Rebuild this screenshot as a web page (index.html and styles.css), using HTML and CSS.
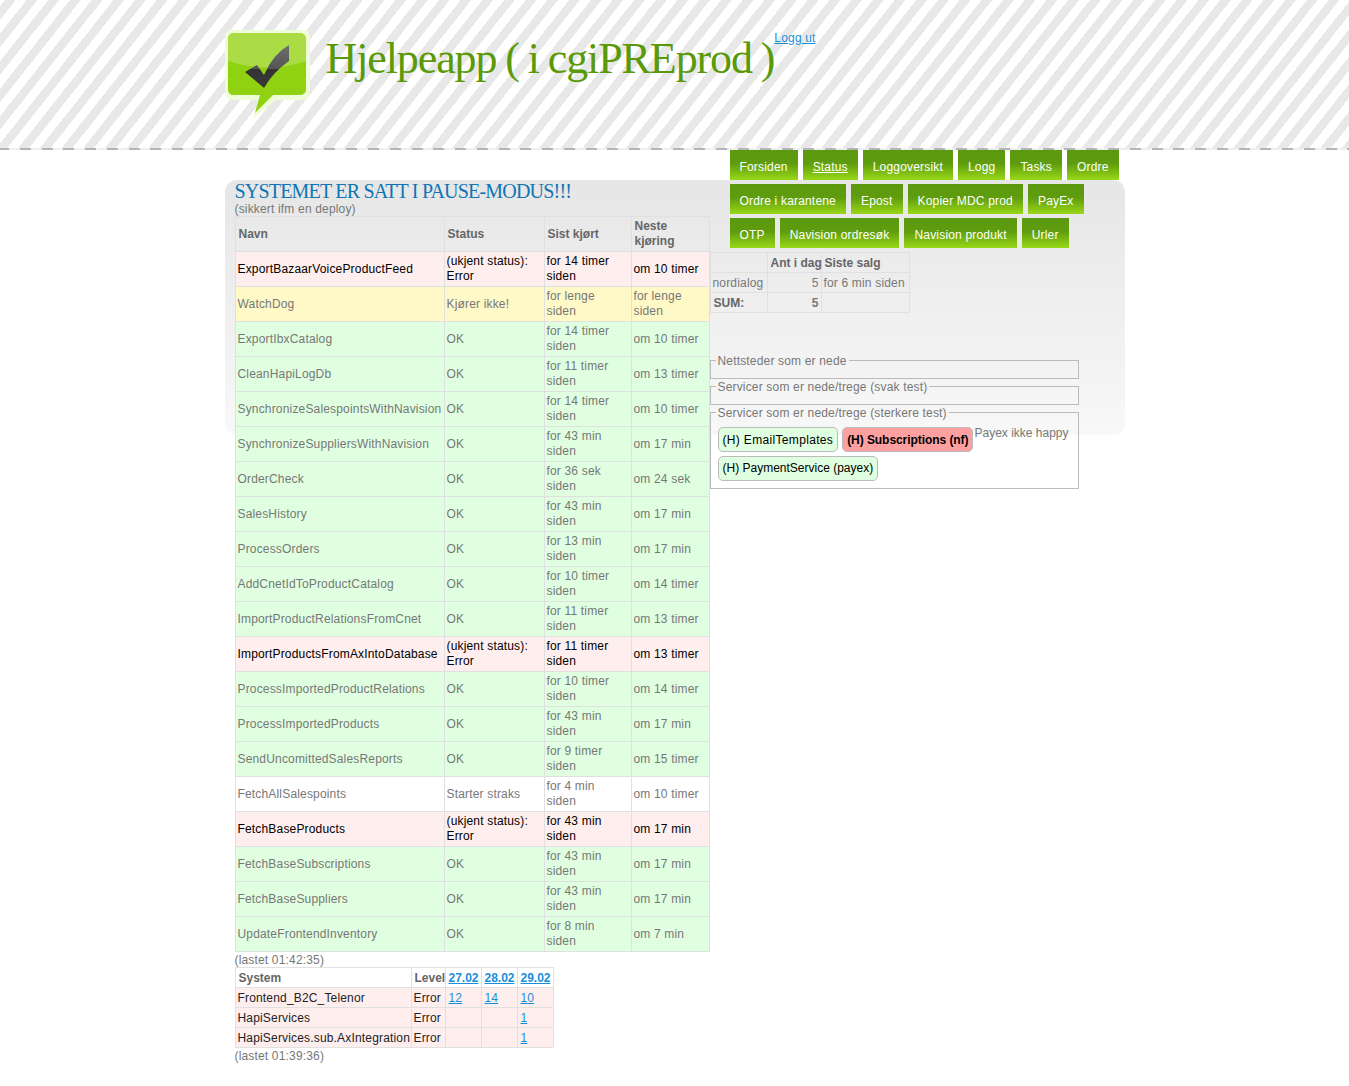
FILE: index.html

```html
<!DOCTYPE html>
<html lang="no">
<head>
    <meta charset="UTF-8">
    <meta name="viewport" content="width=device-width, initial-scale=1.0">
    <title>Hjelpeapp</title>
    <link rel="stylesheet" href="styles.css">
</head>
<body>
    <div class="header">
        <div class="header-inner">
            <svg class="logo" width="90" height="90" viewBox="0 0 90 90">
                <defs>
                    <linearGradient id="checkFill" x1="0" y1="0" x2="0" y2="1">
                        <stop offset="0" stop-color="#6e6e6e"/>
                        <stop offset="0.55" stop-color="#555"/>
                        <stop offset="0.56" stop-color="#333"/>
                        <stop offset="1" stop-color="#3a3a3a"/>
                    </linearGradient>
                </defs>
                <path d="M8 0H78Q85 0 85 7V62Q85 70 78 70H51L28 88L33 70H8Q0 70 0 62V7Q0 0 8 0Z" fill="#eefcd8"/>
                <path d="M9 3H74Q81 3 81 10V59Q81 65 74 65H48L30 83L35 65H9Q3 65 3 59V10Q3 3 9 3Z" fill="#90d212"/>
                <path d="M9 3H74Q81 3 81 10V31Q42 44 3 31V10Q3 3 9 3Z" fill="#abdc45"/>
                <path d="M20 42L32 35L39 45Q48 24 64 15V31Q48 42 39 58Z" fill="url(#checkFill)"/>
            </svg>
            <h1 class="app-title">Hjelpeapp ( i cgiPREprod )</h1>
            <a class="logout" href="#">Logg ut</a>
        </div>
    </div>

    <div class="content">
        <div class="left-col">
            <h2 class="pause-title">SYSTEMET ER SATT I PAUSE-MODUS!!!</h2>
            <div class="deploy">(sikkert ifm en deploy)</div>
            <table class="grid jobs">
                <colgroup>
                    <col class="col-name"><col class="col-status"><col class="col-last"><col class="col-next">
                </colgroup>
                <tr><th>Navn</th><th>Status</th><th>Sist kjørt</th><th>Neste kjøring</th></tr>
                <tr class="err"><td>ExportBazaarVoiceProductFeed</td><td>(ukjent status): Error</td><td>for 14 timer siden</td><td>om 10 timer</td></tr>
                <tr class="warn"><td>WatchDog</td><td>Kjører ikke!</td><td>for lenge siden</td><td>for lenge siden</td></tr>
                <tr class="ok"><td>ExportIbxCatalog</td><td>OK</td><td>for 14 timer siden</td><td>om 10 timer</td></tr>
                <tr class="ok"><td>CleanHapiLogDb</td><td>OK</td><td>for 11 timer siden</td><td>om 13 timer</td></tr>
                <tr class="ok"><td>SynchronizeSalespointsWithNavision</td><td>OK</td><td>for 14 timer siden</td><td>om 10 timer</td></tr>
                <tr class="ok"><td>SynchronizeSuppliersWithNavision</td><td>OK</td><td>for 43 min siden</td><td>om 17 min</td></tr>
                <tr class="ok"><td>OrderCheck</td><td>OK</td><td>for 36 sek siden</td><td>om 24 sek</td></tr>
                <tr class="ok"><td>SalesHistory</td><td>OK</td><td>for 43 min siden</td><td>om 17 min</td></tr>
                <tr class="ok"><td>ProcessOrders</td><td>OK</td><td>for 13 min siden</td><td>om 17 min</td></tr>
                <tr class="ok"><td>AddCnetIdToProductCatalog</td><td>OK</td><td>for 10 timer siden</td><td>om 14 timer</td></tr>
                <tr class="ok"><td>ImportProductRelationsFromCnet</td><td>OK</td><td>for 11 timer siden</td><td>om 13 timer</td></tr>
                <tr class="err"><td>ImportProductsFromAxIntoDatabase</td><td>(ukjent status): Error</td><td>for 11 timer siden</td><td>om 13 timer</td></tr>
                <tr class="ok"><td>ProcessImportedProductRelations</td><td>OK</td><td>for 10 timer siden</td><td>om 14 timer</td></tr>
                <tr class="ok"><td>ProcessImportedProducts</td><td>OK</td><td>for 43 min siden</td><td>om 17 min</td></tr>
                <tr class="ok"><td>SendUncomittedSalesReports</td><td>OK</td><td>for 9 timer siden</td><td>om 15 timer</td></tr>
                <tr class="idle"><td>FetchAllSalespoints</td><td>Starter straks</td><td>for 4 min siden</td><td>om 10 timer</td></tr>
                <tr class="err"><td>FetchBaseProducts</td><td>(ukjent status): Error</td><td>for 43 min siden</td><td>om 17 min</td></tr>
                <tr class="ok"><td>FetchBaseSubscriptions</td><td>OK</td><td>for 43 min siden</td><td>om 17 min</td></tr>
                <tr class="ok"><td>FetchBaseSuppliers</td><td>OK</td><td>for 43 min siden</td><td>om 17 min</td></tr>
                <tr class="ok"><td>UpdateFrontendInventory</td><td>OK</td><td>for 8 min siden</td><td>om 7 min</td></tr>
            </table>
            <div class="note">(lastet 01:42:35)</div>
            <table class="grid errors">
                <colgroup>
                    <col class="col-system"><col class="col-level"><col class="col-day"><col class="col-day"><col class="col-day">
                </colgroup>
                <tr class="white"><th>System</th><th>Level</th><th><a href="#">27.02</a></th><th><a href="#">28.02</a></th><th><a href="#">29.02</a></th></tr>
                <tr class="err"><td>Frontend_B2C_Telenor</td><td>Error</td><td><a href="#">12</a></td><td><a href="#">14</a></td><td><a href="#">10</a></td></tr>
                <tr class="err"><td>HapiServices</td><td>Error</td><td></td><td></td><td><a href="#">1</a></td></tr>
                <tr class="err"><td>HapiServices.sub.AxIntegration</td><td>Error</td><td></td><td></td><td><a href="#">1</a></td></tr>
            </table>
            <div class="note">(lastet 01:39:36)</div>
        </div>

        <div class="right-col">
            <div class="nav">
                <a href="#">Forsiden</a>
                <a href="#" class="current">Status</a>
                <a href="#">Loggoversikt</a>
                <a href="#">Logg</a>
                <a href="#">Tasks</a>
                <a href="#">Ordre</a>
                <a href="#">Ordre i karantene</a>
                <a href="#">Epost</a>
                <a href="#">Kopier MDC prod</a>
                <a href="#">PayEx</a>
                <a href="#">OTP</a>
                <a href="#">Navision ordresøk</a>
                <a href="#">Navision produkt</a>
                <a href="#">Urler</a>
            </div>
            <table class="grid sales">
                <colgroup>
                    <col class="col-shop"><col class="col-count"><col class="col-sale">
                </colgroup>
                <tr><th></th><th>Ant i dag</th><th>Siste salg</th></tr>
                <tr><td>nordialog</td><td class="num">5</td><td>for 6 min siden</td></tr>
                <tr><th>SUM:</th><td class="num"><b>5</b></td><td></td></tr>
            </table>
            <fieldset class="first">
                <legend>Nettsteder som er nede</legend>
            </fieldset>
            <fieldset>
                <legend>Servicer som er nede/trege (svak test)</legend>
            </fieldset>
            <fieldset class="services">
                <legend>Servicer som er nede/trege (sterkere test)</legend>
                <div class="pills">
                    <span class="pill wide">(H) EmailTemplates</span>
                    <span class="pill down">(H) Subscriptions (nf)</span>
                    <span class="pill-note">Payex ikke happy</span>
                    <span class="pill">(H) PaymentService (payex)</span>
                </div>
            </fieldset>
        </div>
    </div>
</body>
</html>
```

FILE: styles.css

```css
body {
    margin: 0;
    font-family: "Liberation Sans", Arial, sans-serif;
    font-size: 12px;
    line-height: 15px;
    letter-spacing: 0.17px;
    color: #777;
    background-color: #fff;
}
a {
    color: #1a8fd8;
}

/* header */
.header {
    height: 148px;
    border-bottom: 2px solid transparent;
    border-image: repeating-linear-gradient(90deg, #b5b5b5 0, #b5b5b5 11px, #efefef 11px, #efefef 21.7px) 2;
    background: repeating-linear-gradient(128.3deg, #fff 0, #fff 3.9px, #e8e8e8 3.9px, #e8e8e8 12.3px, #fff 12.3px, #fff 17.03px);
}
.header-inner {
    width: 900px;
    margin: 0 auto;
    display: flex;
    align-items: flex-start;
}
.logo {
    margin-top: 30px;
    margin-right: 11px;
    flex-shrink: 0;
}
.app-title {
    margin: 34px 0 0;
    font-family: "Liberation Serif", "Times New Roman", serif;
    font-size: 44px;
    line-height: 50px;
    font-weight: normal;
    letter-spacing: -1.1px;
    word-spacing: -1px;
    color: #5a9a08;
    white-space: nowrap;
}
.logout {
    margin-top: 31px;
}

/* content */
.content {
    position: relative;
    width: 900px;
    margin: 0 auto;
    display: flex;
}
.content::before {
    content: "";
    position: absolute;
    left: 0;
    right: 0;
    top: 30px;
    height: 255px;
    border-radius: 12px;
    background: linear-gradient(#e6e6e6, #f8f8f8);
}
.left-col {
    position: relative;
    width: 475px;
    margin-left: 10px;
    padding-top: 30px;
    flex-shrink: 0;
}
.right-col {
    position: relative;
    width: 415px;
}
.pause-title {
    margin: 0;
    font-family: "Liberation Serif", "Times New Roman", serif;
    font-size: 20px;
    line-height: 22px;
    font-weight: normal;
    letter-spacing: -0.8px;
    color: #0f75b5;
}
.deploy {
    line-height: 14px;
}
.note {
    padding-top: 1px;
    line-height: 14px;
}

/* tables */
.grid {
    border-collapse: collapse;
    table-layout: fixed;
}
.grid th,
.grid td {
    border: 1px solid #e0e0e0;
    padding: 2px;
    text-align: left;
    vertical-align: middle;
}
.grid th {
    padding-left: 3px;
    letter-spacing: 0;
    color: #666;
}
.jobs {
    width: 475px;
}
.jobs td:nth-child(3) {
    padding-right: 10px;
}
.col-name { width: 209px; }
.col-status { width: 100px; }
.col-last { width: 87px; }
.col-next { width: 78px; }
.ok { background-color: #e0ffe0; }
.warn { background-color: #fff9c8; }
.idle { background-color: #fff; }
.err { background-color: #ffeeee; }
.err td { color: #000; }
.white { background-color: #fff; }

.errors {
    width: 318px;
}
.errors .err td { color: #222; }
.errors th,
.errors td,
.sales th,
.sales td {
    padding-top: 3px;
    padding-bottom: 1px;
}
.errors td:nth-child(n+3) {
    padding-left: 3px;
}
.col-system { width: 176px; }
.col-level { width: 34px; }
.col-day { width: 36px; }

/* nav */
.nav {
    display: flex;
    flex-wrap: wrap;
    gap: 4px 5px;
    margin-left: 20px;
}
.nav a {
    height: 30px;
    line-height: 34px;
    padding: 0 10px;
    color: #fff;
    letter-spacing: 0.18px;
    text-decoration: none;
    background: linear-gradient(#5a980e 0, #5f9c0e 45%, #98d818 100%);
}
.nav a.current {
    text-decoration: underline;
}

.sales {
    width: 199px;
    margin-top: 4px;
    white-space: nowrap;
}
.col-shop { width: 57px; }
.col-count { width: 54px; }
.col-sale { width: 88px; }
.num {
    text-align: right !important;
}

/* fieldsets */
fieldset {
    width: 353px;
    box-sizing: content-box;
    margin: -1px 0 0;
    padding: 0 7px 10px;
    border: 1px solid #bbb;
}
fieldset.first {
    margin-top: 39px;
}
legend {
    padding: 2px 2px 0;
    margin-left: -2px;
    line-height: 14px;
}
.services {
    padding-bottom: 7px;
}
.pills {
    display: flex;
    flex-wrap: wrap;
    align-items: flex-start;
    gap: 4px;
    margin-top: 7px;
}
.pill {
    padding: 5px 4px 3px;
    border: 1px solid #bbb;
    border-radius: 5px;
    background-color: #e0ffe0;
    color: #000;
    letter-spacing: 0;
}
.pill:last-child {
    padding: 4px;
}
.pill.wide {
    letter-spacing: 0.33px;
}
.pill.down {
    background-color: #ffa0a0;
    font-weight: bold;
    letter-spacing: -0.06px;
}
.pill-note {
    margin: -1px 0 0 -3px;
    letter-spacing: 0;
}
```
